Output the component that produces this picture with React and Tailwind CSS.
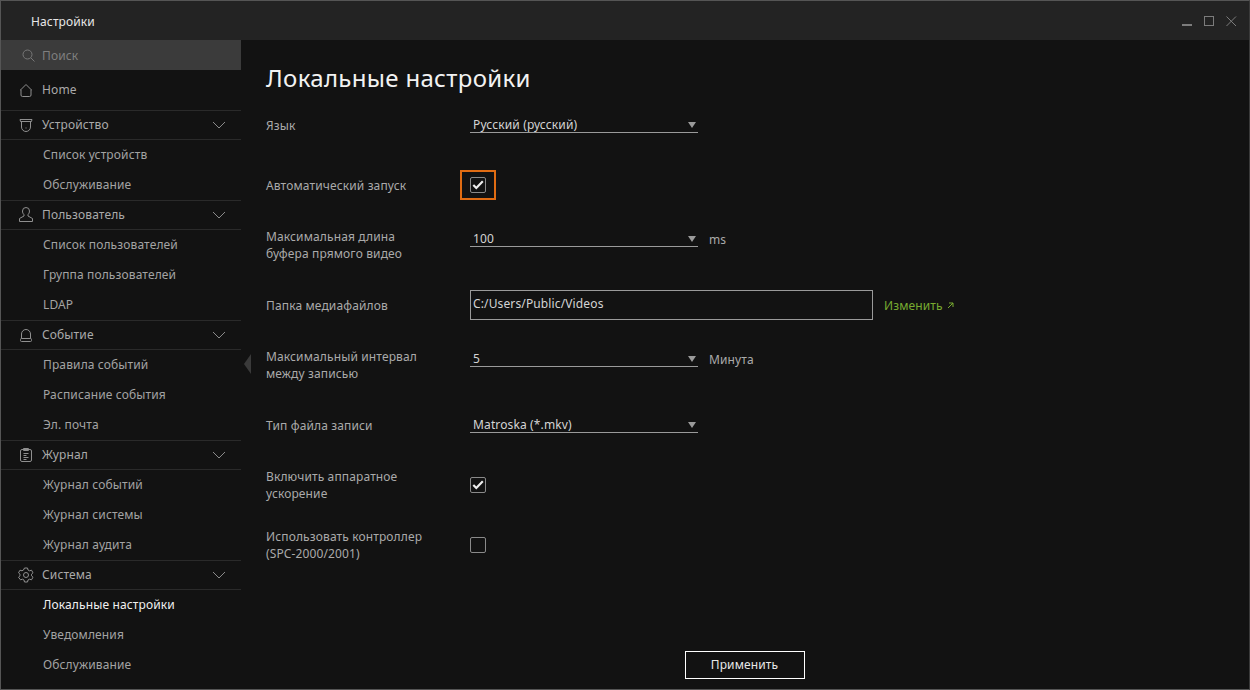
import React from 'react'

const HomeIcon = () => (
  <svg width="16" height="16" viewBox="0 0 16 16" fill="none" stroke="#8f8f8f" strokeWidth="1">
    <path d="M2.500 8 8 2.500 13.500 8H13v5a1.500 1.500 0 0 1-1.500 1.500h-7A1.500 1.500 0 0 1 3 13V8z" />
  </svg>
)
const CameraIcon = () => (
  <svg width="16" height="16" viewBox="0 0 16 16" fill="none" stroke="#8f8f8f" strokeWidth="1">
    <path d="M2 2.500h12M2 2.500l.5 2h11l.5-2" />
    <path d="M3.500 5v5c0 2.500 2 4.500 4.500 4.500s4.500-2 4.500-4.500V5" />
    <path d="M8 10.500v1" />
  </svg>
)
const UserIcon = () => (
  <svg width="16" height="16" viewBox="0 0 16 16" fill="none" stroke="#8f8f8f" strokeWidth="1">
    <path d="M8 .5a3.500 3.500 0 0 0-3.500 3.500c0 1.500.5 2.800 1.500 3.700v1.300L1.500 11.500v3h13v-3L10 9V7.700c1-.9 1.500-2.200 1.500-3.700A3.500 3.500 0 0 0 8 .5z" />
  </svg>
)
const BellIcon = () => (
  <svg width="16" height="16" viewBox="0 0 16 16" fill="none" stroke="#8f8f8f" strokeWidth="1">
    <path d="M3.500 11.500V7a4.500 4.500 0 0 1 9 0v4.500" />
    <rect x="2.500" y="11.500" width="11" height="3" rx="1" />
  </svg>
)
const LogIcon = () => (
  <svg width="16" height="16" viewBox="0 0 16 16" fill="none" stroke="#8f8f8f" strokeWidth="1">
    <rect x="2.500" y="2.500" width="11" height="12" rx="1.500" />
    <path d="M5.500 1.500h5v2h-5zM5.500 6.500h5M5.500 8.500h3M5.500 10.500h5M5.500 12.500h3" />
  </svg>
)
const GearIcon = () => (
  <svg width="16" height="16" viewBox="0 0 16 16" fill="none" stroke="#8f8f8f" strokeWidth="1">
    <path d="M6.500 1h3l.5 2 1.500.8 2-.6 1.500 2.600-1.500 1.400v1.600l1.500 1.400-1.500 2.600-2-.6-1.500.8-.5 2h-3l-.5-2-1.500-.8-2 .6L.500 10.200 2 8.800V7.200L.500 5.800 2 3.200l2 .6L5.500 3z" />
    <circle cx="8" cy="8" r="2.500" />
  </svg>
)
const SearchIcon = () => (
  <svg width="13" height="13" viewBox="0 0 13 13" fill="none" stroke="#777" strokeWidth="1">
    <circle cx="5.500" cy="5.500" r="4.500" />
    <path d="m9 9 3.500 3.500" />
  </svg>
)
const Chevron = () => (
  <svg width="14" height="8" viewBox="0 0 14 8" fill="none" stroke="#8a8a8a" strokeWidth="1">
    <path d="m1 1 6 6 6-6" />
  </svg>
)
const Tick = () => (
  <svg width="12" height="10" viewBox="0 0 12 10" fill="none" stroke="#eeeeee" strokeWidth="2.200">
    <path d="m1.300 5 3 3L10.800 1.300" />
  </svg>
)

const NAV = [
  { title: 'Устройство', icon: CameraIcon, items: ['Список устройств', 'Обслуживание'] },
  { title: 'Пользователь', icon: UserIcon, items: ['Список пользователей', 'Группа пользователей', 'LDAP'] },
  { title: 'Событие', icon: BellIcon, items: ['Правила событий', 'Расписание события', 'Эл. почта'] },
  { title: 'Журнал', icon: LogIcon, items: ['Журнал событий', 'Журнал системы', 'Журнал аудита'] },
  { title: 'Система', icon: GearIcon, items: ['Локальные настройки', 'Уведомления', 'Обслуживание'] },
]

function Select({ value, top }) {
  return (
    <div className={`w-[228px] h-[16px] border-b border-[#9a9a9a] flex items-center justify-between pl-[3px] pr-[2px] text-[#d4d4d4] ${top ? 'mb-[12px]' : ''}`}>
      <span className="leading-[16px]">{value}</span>
      <span className="w-0 h-0 border-l-[4px] border-r-[4px] border-t-[6px] border-l-transparent border-r-transparent border-t-[#9a9a9a]" />
    </div>
  )
}

function Checkbox({ checked }) {
  return (
    <div className="w-[16px] h-[16px] border border-[#8a8a8a] rounded-[2px] flex items-center justify-center">
      {checked && <Tick />}
    </div>
  )
}

function Row({ label, children }) {
  return (
    <div className="h-[60px] flex items-center">
      <div className="w-[204px] leading-[17px] text-[#aaaaaa] whitespace-pre-line">{label}</div>
      {children}
    </div>
  )
}

export default function App() {
  return (
    <div className="w-[1250px] h-[690px] flex flex-col bg-[#121212] border border-[#555555] border-r-[#3a3a3a] overflow-hidden text-[12px] tracking-[0.13px] font-['Noto_Sans',sans-serif]">
      {/* Title bar */}
      <div className="h-[39px] shrink-0 bg-[#232323] flex items-center justify-between pl-[30px] pr-[12px]">
        <span className="text-[#e8e8e8] text-[12px] pt-[3px]">Настройки</span>
        <svg width="56" height="12" viewBox="0 0 56 12" fill="none" stroke="#7c7c7c" className="mt-[1px]">
          <path d="M1 10h10" strokeWidth="2" />
          <rect x="23.500" y="1.500" width="9" height="9" />
          <path d="m45.500 1.500 9.500 9.500M55 1.500 45.500 11" />
        </svg>
      </div>

      <div className="flex-1 flex min-h-0">
        {/* Sidebar */}
        <div className="w-[240px] shrink-0 flex flex-col">
          <div className="h-[30px] bg-[#3b3b3b] flex items-center pl-[21px] gap-[7px] text-[#7f7f7f]">
            <SearchIcon />
            <span className="pt-[2px]">Поиск</span>
          </div>
          <div className="h-[41px] flex items-center pl-[17px] gap-[8px] text-[#aaaaaa] border-b border-[#2a2a2a]">
            <HomeIcon />
            <span>Home</span>
          </div>
          {NAV.map((g, i) => {
            const Icon = g.icon
            return (
              <div key={g.title} className={i < NAV.length - 1 ? 'border-b border-[#2a2a2a]' : ''}>
                <div className="h-[29px] flex items-center justify-between pl-[17px] pr-[15px] text-[#aaaaaa] border-b border-[#2a2a2a]">
                  <div className="flex items-center gap-[8px]">
                    <Icon />
                    <span>{g.title}</span>
                  </div>
                  <Chevron />
                </div>
                {g.items.map(it => (
                  <div
                    key={it}
                    className={`h-[30px] flex items-center pl-[42px] ${it === 'Локальные настройки' ? 'text-[#f0f0f0]' : 'text-[#a3a3a3]'}`}
                  >
                    {it}
                  </div>
                ))}
              </div>
            )
          })}
        </div>

        {/* Collapse handle */}
        <div className="w-[25px] shrink-0 flex items-center">
          <span className="ml-[3px] mt-[-1px] w-0 h-0 border-y-[10px] border-r-[7px] border-y-transparent border-r-[#3a3a3a]" />
        </div>

        {/* Main */}
        <div className="flex-1 flex flex-col min-w-0">
          <h1 className="h-[55px] pt-[19px] text-[24px] tracking-[0.32px] leading-[38px] text-[#f2f2f2] font-normal">Локальные настройки</h1>
          <Row label="Язык">
            <Select value="Русский (русский)" />
          </Row>
          <Row label="Автоматический запуск">
            <div className="w-[36px] h-[30px] ml-[-10px] border-2 border-[#e06c13] flex items-center justify-center">
              <Checkbox checked />
            </div>
          </Row>
          <Row label={'Максимальная длина\nбуфера прямого видео'}>
            <Select value="100" top />
            <span className="ml-[11px] mb-[10px] text-[#aaaaaa]">ms</span>
          </Row>
          <Row label="Папка медиафайлов">
            <div className="w-[403px] h-[30px] border border-[#9a9a9a] pl-[2px] leading-[26px] text-[#d4d4d4]">C:/Users/Public/Videos</div>
            <span className="ml-[11px] pt-[1px] text-[#78ab30]">Изменить</span>
            <svg className="ml-[4px] mt-[1px]" width="7" height="7" viewBox="0 0 7 7" fill="none" stroke="#78ab30" strokeWidth="1">
              <path d="M2 1h4v4M6 1 1 6" />
            </svg>
          </Row>
          <Row label={'Максимальный интервал\nмежду записью'}>
            <Select value="5" top />
            <span className="ml-[11px] mb-[10px] text-[#aaaaaa]">Минута</span>
          </Row>
          <Row label="Тип файла записи">
            <Select value="Matroska (*.mkv)" />
          </Row>
          <Row label={'Включить аппаратное\nускорение'}>
            <Checkbox checked />
          </Row>
          <Row label={'Использовать контроллер\n(SPC-2000/2001)'}>
            <Checkbox />
          </Row>
          <div className="flex-1 flex items-end justify-center pb-[10px] pr-[26px]">
            <button className="w-[120px] h-[28px] border border-white text-[#e8e8e8] text-[12px]">Применить</button>
          </div>
        </div>
      </div>
    </div>
  )
}
